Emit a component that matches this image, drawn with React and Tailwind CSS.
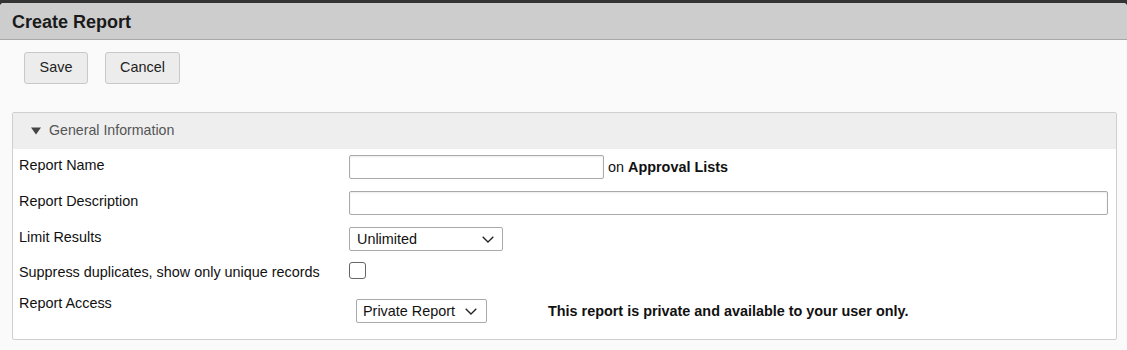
import React from "react";

function Chevron() {
  return (
    <svg width="12" height="7" viewBox="0 0 12 7" className="shrink-0">
      <polyline points="0.7,0.7 6,6 11.3,0.7" fill="none" stroke="#222" strokeWidth="1.3" />
    </svg>
  );
}

function Select({ value, className }) {
  return (
    <div className={"h-[23px] border border-[#a9a9a9] rounded-[2px] bg-white flex items-center justify-between text-[14.4px] text-[#111] " + className}>
      <span className="mt-[2px]">{value}</span>
      <Chevron />
    </div>
  );
}

export default function App() {
  return (
    <div className="w-[1127px] h-[350px] bg-[#333] pt-[3px] font-['Liberation_Sans',Arial,sans-serif] overflow-hidden">
      <div className="h-[347px] rounded-t-[4px] bg-[#fafafa] overflow-hidden">
        <div className="h-[37px] bg-[#cdcdcd] border-b border-[#a8a8a8] flex items-center pl-[12px] pt-[1px]">
          <span className="text-[18px] font-bold text-[#1a1a1a] leading-none">Create Report</span>
        </div>
        <div className="flex gap-[17px] pl-[24px] pt-[12px]">
          <button className="w-[64px] h-[32px] bg-[#ececec] border border-[#c8c8c8] rounded-[3px] text-[14.4px] text-[#222]">Save</button>
          <button className="w-[75px] h-[32px] bg-[#ececec] border border-[#c8c8c8] rounded-[3px] text-[14.4px] text-[#222]">Cancel</button>
        </div>
        <div className="ml-[12px] mt-[28px] w-[1105px] h-[228px] border border-[#cfcfcf] rounded-[2px] bg-white">
          <div className="h-[36px] bg-[#eeeeee] flex items-center pl-[18px]">
            <svg width="10" height="8" viewBox="0 0 10 8" className="mr-[8px]">
              <polygon points="0,0.5 10,0.5 5,7.5" fill="#444" />
            </svg>
            <span className="text-[14.2px] text-[#555]">General Information</span>
          </div>
          <div className="text-[14.4px] text-[#111]">
            <div className="h-[36px] flex items-start pt-[6px] pl-[6px]">
              <div className="w-[330px] leading-[16px] mt-[2px]">Report Name</div>
              <div className="w-[255px] h-[24px] border border-[#a9a9a9] rounded-[2px] bg-white shadow-[inset_0_1px_2px_rgba(0,0,0,0.08)]"></div>
              <div className="ml-[4px] mt-[4px] leading-[16px]">on <span className="font-bold">Approval Lists</span></div>
            </div>
            <div className="h-[36px] flex items-start pt-[6px] pl-[6px]">
              <div className="w-[330px] leading-[16px] mt-[2px]">Report Description</div>
              <div className="w-[759px] h-[24px] border border-[#a9a9a9] rounded-[2px] bg-white shadow-[inset_0_1px_2px_rgba(0,0,0,0.08)]"></div>
            </div>
            <div className="h-[35px] flex items-start pt-[6px] pl-[6px]">
              <div className="w-[330px] leading-[16px] mt-[2px]">Limit Results</div>
              <Select value="Unlimited" className="w-[154px] h-[24px] pl-[7px] pr-[8px]" />
            </div>
            <div className="h-[31px] flex items-start pt-[6px] pl-[6px]">
              <div className="w-[330px] leading-[16px] mt-[2px]">Suppress duplicates, show only unique records</div>
              <div className="w-[17px] h-[17px] border border-[#666] rounded-[3px] bg-white"></div>
            </div>
            <div className="flex items-start pt-[6px] pl-[6px]">
              <div className="w-[330px] leading-[16px] mt-[2px]">Report Access</div>
              <Select value="Private Report" className="ml-[7px] mt-[6px] w-[131px] h-[24px] pl-[6px] pr-[9px]" />
              <div className="ml-[61px] mt-[10px] font-bold leading-[16px]">This report is private and available to your user only.</div>
            </div>
          </div>
        </div>
      </div>
    </div>
  );
}
